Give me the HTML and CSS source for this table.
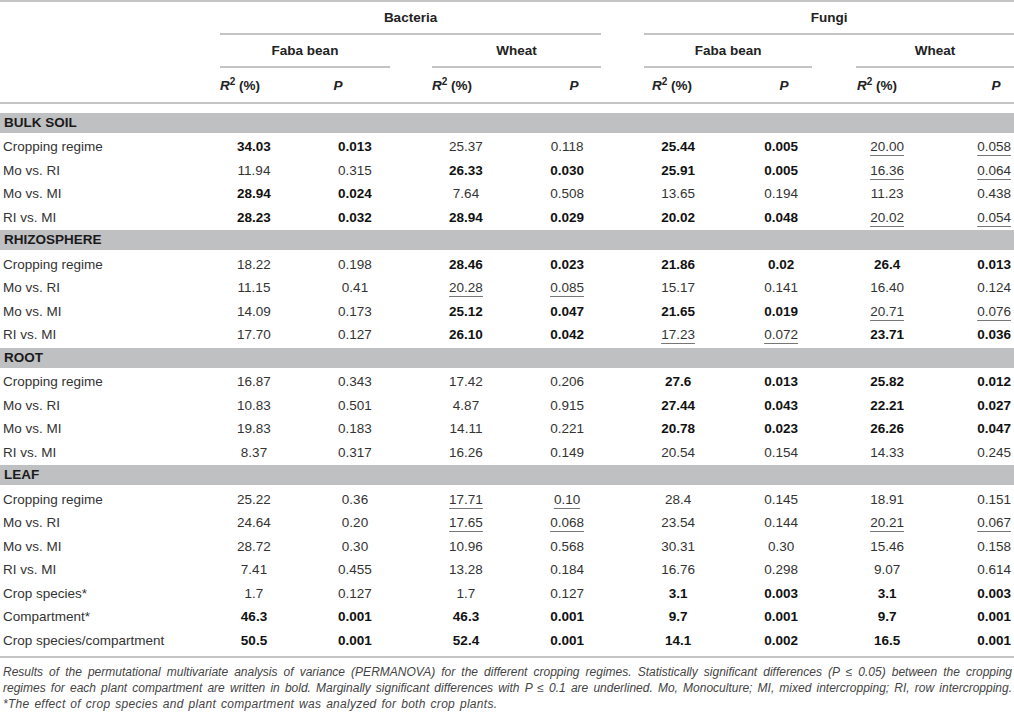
FILE: index.html
```html
<!DOCTYPE html>
<html lang="en">
<head>
    <title>PERMANOVA results</title>
    <meta name="viewport" content="width=device-width, initial-scale=1.0">
    <link rel="stylesheet" href="styles.css">
</head>
<body>
    <table class="permanova">
        <colgroup>
            <col class="c-label">
            <col class="c-r"><col class="c-p">
            <col class="c-r"><col class="c-p">
            <col class="c-r"><col class="c-p">
            <col class="c-rd"><col class="c-pd">
        </colgroup>
        <thead>
            <tr class="h-top">
                <th></th>
                <th colspan="4"><div class="rule gap-b">Bacteria</div></th>
                <th colspan="4"><div class="rule">Fungi</div></th>
            </tr>
            <tr class="h-mid">
                <th></th>
                <th colspan="2"><div class="rule gap-a">Faba bean</div></th>
                <th colspan="2"><div class="rule gap-b">Wheat</div></th>
                <th colspan="2"><div class="rule gap-c">Faba bean</div></th>
                <th colspan="2"><div class="rule">Wheat</div></th>
            </tr>
            <tr class="h-cols">
                <th></th>
                <th class="hr"><i>R</i><sup>2</sup> (%)</th><th class="hp"><i>P</i></th>
                <th class="hr"><i>R</i><sup>2</sup> (%)</th><th class="hp"><i>P</i></th>
                <th class="hr"><i>R</i><sup>2</sup> (%)</th><th class="hp"><i>P</i></th>
                <th class="hr"><i>R</i><sup>2</sup> (%)</th><th class="hp"><i>P</i></th>
            </tr>
        </thead>
        <tbody>
            <tr class="spacer"><td colspan="9"></td></tr>

            <tr class="section"><td colspan="9"><div>BULK SOIL</div></td></tr>
            <tr><td>Cropping regime</td><td class="b">34.03</td><td class="b">0.013</td><td>25.37</td><td>0.118</td><td class="b">25.44</td><td class="b">0.005</td><td><u>20.00</u></td><td><u>0.058</u></td></tr>
            <tr><td>Mo vs. RI</td><td>11.94</td><td>0.315</td><td class="b">26.33</td><td class="b">0.030</td><td class="b">25.91</td><td class="b">0.005</td><td><u>16.36</u></td><td><u>0.064</u></td></tr>
            <tr><td>Mo vs. MI</td><td class="b">28.94</td><td class="b">0.024</td><td>7.64</td><td>0.508</td><td>13.65</td><td>0.194</td><td>11.23</td><td>0.438</td></tr>
            <tr><td>RI vs. MI</td><td class="b">28.23</td><td class="b">0.032</td><td class="b">28.94</td><td class="b">0.029</td><td class="b">20.02</td><td class="b">0.048</td><td><u>20.02</u></td><td><u>0.054</u></td></tr>

            <tr class="section"><td colspan="9"><div>RHIZOSPHERE</div></td></tr>
            <tr><td>Cropping regime</td><td>18.22</td><td>0.198</td><td class="b">28.46</td><td class="b">0.023</td><td class="b">21.86</td><td class="b">0.02</td><td class="b">26.4</td><td class="b">0.013</td></tr>
            <tr><td>Mo vs. RI</td><td>11.15</td><td>0.41</td><td><u>20.28</u></td><td><u>0.085</u></td><td>15.17</td><td>0.141</td><td>16.40</td><td>0.124</td></tr>
            <tr><td>Mo vs. MI</td><td>14.09</td><td>0.173</td><td class="b">25.12</td><td class="b">0.047</td><td class="b">21.65</td><td class="b">0.019</td><td><u>20.71</u></td><td><u>0.076</u></td></tr>
            <tr><td>RI vs. MI</td><td>17.70</td><td>0.127</td><td class="b">26.10</td><td class="b">0.042</td><td><u>17.23</u></td><td><u>0.072</u></td><td class="b">23.71</td><td class="b">0.036</td></tr>

            <tr class="section"><td colspan="9"><div>ROOT</div></td></tr>
            <tr><td>Cropping regime</td><td>16.87</td><td>0.343</td><td>17.42</td><td>0.206</td><td class="b">27.6</td><td class="b">0.013</td><td class="b">25.82</td><td class="b">0.012</td></tr>
            <tr><td>Mo vs. RI</td><td>10.83</td><td>0.501</td><td>4.87</td><td>0.915</td><td class="b">27.44</td><td class="b">0.043</td><td class="b">22.21</td><td class="b">0.027</td></tr>
            <tr><td>Mo vs. MI</td><td>19.83</td><td>0.183</td><td>14.11</td><td>0.221</td><td class="b">20.78</td><td class="b">0.023</td><td class="b">26.26</td><td class="b">0.047</td></tr>
            <tr><td>RI vs. MI</td><td>8.37</td><td>0.317</td><td>16.26</td><td>0.149</td><td>20.54</td><td>0.154</td><td>14.33</td><td>0.245</td></tr>

            <tr class="section"><td colspan="9"><div>LEAF</div></td></tr>
            <tr><td>Cropping regime</td><td>25.22</td><td>0.36</td><td><u>17.71</u></td><td><u>0.10</u></td><td>28.4</td><td>0.145</td><td>18.91</td><td>0.151</td></tr>
            <tr><td>Mo vs. RI</td><td>24.64</td><td>0.20</td><td><u>17.65</u></td><td><u>0.068</u></td><td>23.54</td><td>0.144</td><td><u>20.21</u></td><td><u>0.067</u></td></tr>
            <tr><td>Mo vs. MI</td><td>28.72</td><td>0.30</td><td>10.96</td><td>0.568</td><td>30.31</td><td>0.30</td><td>15.46</td><td>0.158</td></tr>
            <tr><td>RI vs. MI</td><td>7.41</td><td>0.455</td><td>13.28</td><td>0.184</td><td>16.76</td><td>0.298</td><td>9.07</td><td>0.614</td></tr>
            <tr><td>Crop species*</td><td>1.7</td><td>0.127</td><td>1.7</td><td>0.127</td><td class="b">3.1</td><td class="b">0.003</td><td class="b">3.1</td><td class="b">0.003</td></tr>
            <tr><td>Compartment*</td><td class="b">46.3</td><td class="b">0.001</td><td class="b">46.3</td><td class="b">0.001</td><td class="b">9.7</td><td class="b">0.001</td><td class="b">9.7</td><td class="b">0.001</td></tr>
            <tr><td>Crop species/compartment</td><td class="b">50.5</td><td class="b">0.001</td><td class="b">52.4</td><td class="b">0.001</td><td class="b">14.1</td><td class="b">0.002</td><td class="b">16.5</td><td class="b">0.001</td></tr>

            <tr class="tail"><td colspan="9"></td></tr>
        </tbody>
    </table>

    <div class="caption">
        <div class="line just">Results of the permutational multivariate analysis of variance (PERMANOVA) for the different cropping regimes. Statistically significant differences (P &le; 0.05) between the cropping</div>
        <div class="line just">regimes for each plant compartment are written in bold. Marginally significant differences with P &le; 0.1 are underlined. Mo, Monoculture; MI, mixed intercropping; RI, row intercropping.</div>
        <div class="line note">*The effect of crop species and plant compartment was analyzed for both crop plants.</div>
    </div>
</body>
</html>
```

FILE: styles.css
```css
body {
    margin: 0;
    background-color: #fff;
    font-family: "Liberation Sans", Arial, sans-serif;
    color: #333;
}
.permanova {
    width: 1014px;
    table-layout: fixed;
    border-collapse: separate;
    border-spacing: 0;
    border-top: 2px solid #c4c4c4;
    border-bottom: 2px solid #c4c4c4;
    font-size: 13.5px;
}
.c-label { width: 220px; }
.c-r { width: 68px; }
.c-p { width: 144px; }
.c-rd { width: 62px; }
.c-pd { width: 96px; }

th {
    padding: 0;
    font-weight: bold;
    color: #222;
}
th i {
    font-style: italic;
}
th sup {
    font-size: 10px;
    line-height: 0;
    vertical-align: 5px;
}
.rule {
    height: 31px;
    line-height: 31px;
    text-align: center;
    border-bottom: 2px solid #c4c4c4;
}
.gap-a { margin-right: 42px; }
.gap-b { margin-right: 43px; }
.gap-c { margin-right: 44px; }

.h-cols th {
    height: 34px;
    border-bottom: 2px solid #c4c4c4;
}
.h-cols .hr {
    text-align: left;
}
.h-cols .hr:nth-child(6) { padding-left: 8px; }
.h-cols .hr:nth-child(8) { padding-left: 1px; }
.h-cols .hp { text-align: center; }
.h-cols .hp:nth-child(3) { padding-right: 44px; }
.h-cols .hp:nth-child(5) { padding-left: 4px; }
.h-cols .hp:nth-child(9) { padding-left: 60px; }

tbody tr {
    height: 23.5px;
}
td {
    padding: 0;
    text-align: center;
    line-height: 16px;
    white-space: nowrap;
}
td:first-child {
    text-align: left;
    padding-left: 3px;
}
td:nth-child(3),
td:nth-child(5) { padding-right: 10px; }
td:nth-child(7) { padding-right: 6px; }
td:nth-child(9) { padding-left: 56px; }

td.b {
    font-weight: bold;
    color: #111;
}
td u {
    text-decoration: underline;
    text-decoration-color: #777;
    text-decoration-thickness: 1px;
    text-underline-offset: 4px;
}

tbody tr.spacer { height: 7.75px; }
.spacer td { line-height: 0; }
tbody tr.tail { height: 4px; }
.tail td { line-height: 0; }

.section td {
    padding: 1px 0 2.5px 0;
}
.section div {
    height: 20px;
    line-height: 20px;
    background-color: #bfc0c2;
    padding-left: 4px;
    font-weight: bold;
    color: #1a1a1a;
    text-align: left;
}

.caption {
    margin-top: 6px;
    padding: 0 2px 0 3px;
    font-size: 12px;
    font-style: italic;
    line-height: 16px;
    color: #444;
}
.caption .line {
    white-space: nowrap;
}
.caption .just {
    text-align: justify;
    text-align-last: justify;
}
.caption .note {
    letter-spacing: 0.3px;
    word-spacing: 1.2px;
}
```
